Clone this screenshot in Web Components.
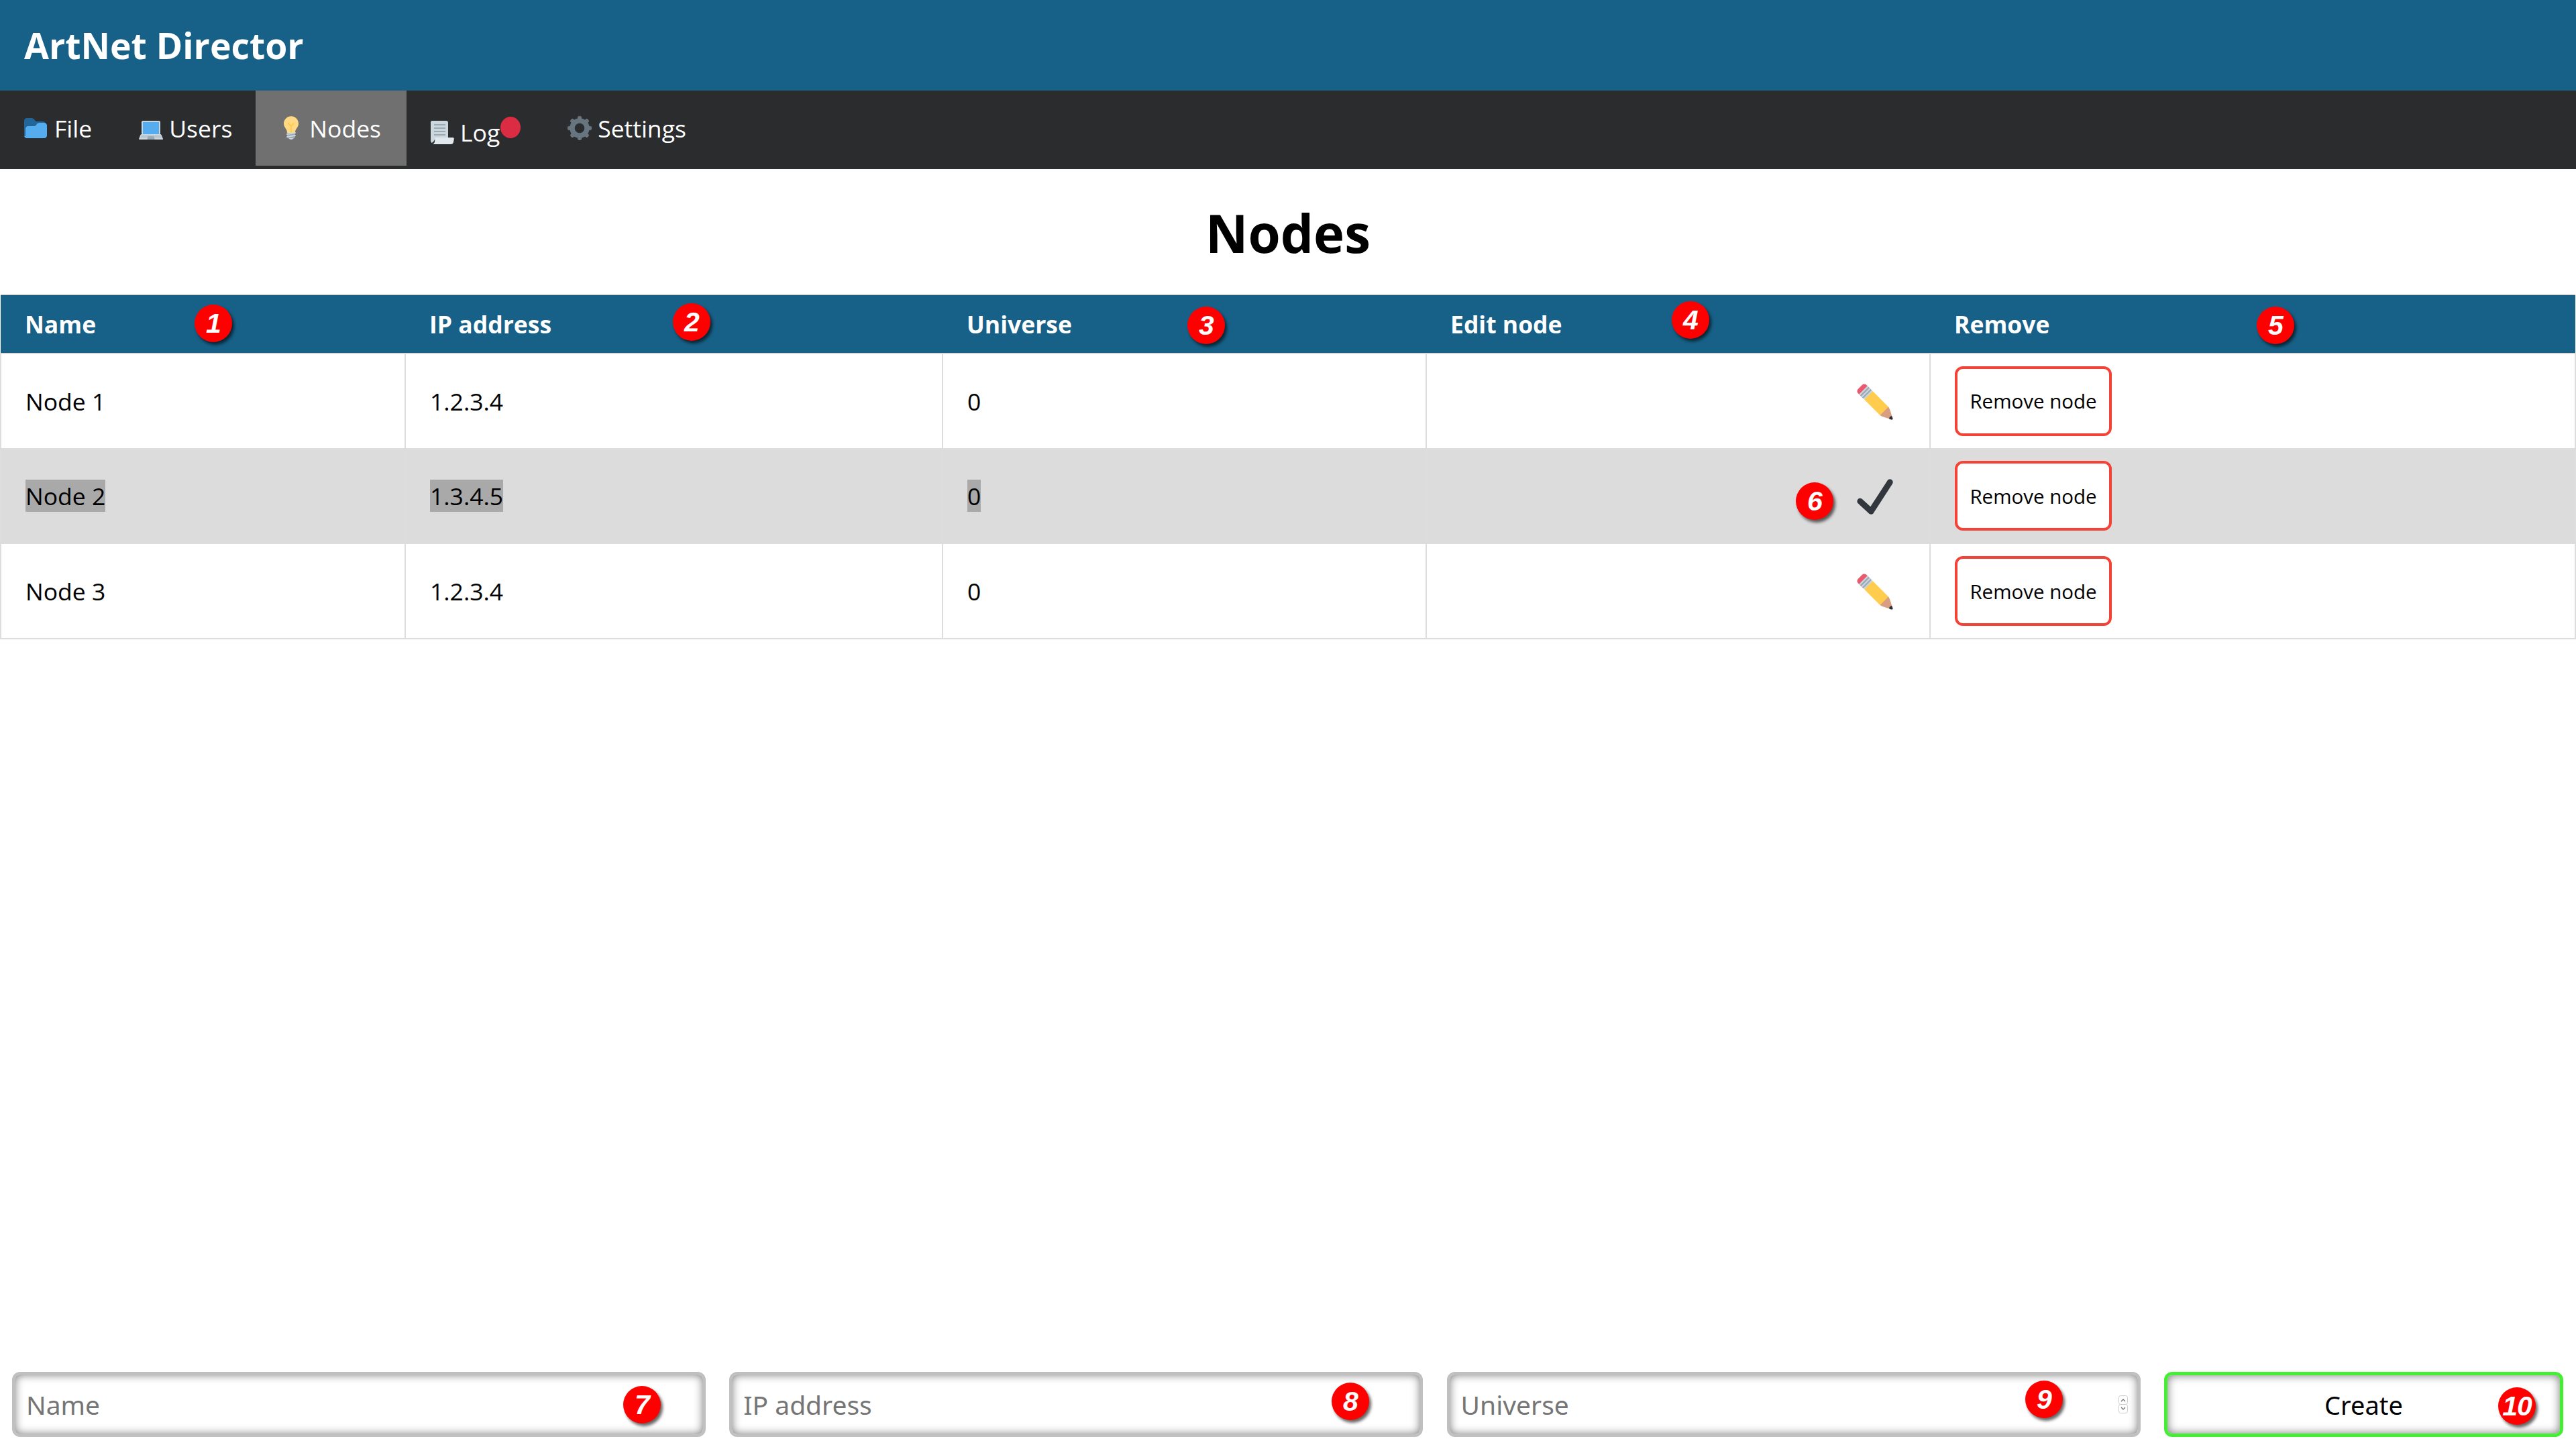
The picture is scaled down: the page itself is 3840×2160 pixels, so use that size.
<!DOCTYPE html>
<html><head><meta charset="utf-8"><title>ArtNet Director</title>
<style>
html,body{margin:0;height:100%;background:#fff}
body{font-family:"Open Sans",sans-serif;font-size:36px;color:#000}
</style></head>
<body>
<app-shell>
  <app-header slot="header">ArtNet Director</app-header>
  <app-nav slot="nav">
    <nav-item icon="folder">File</nav-item>
    <nav-item icon="laptop">Users</nav-item>
    <nav-item icon="bulb" active>Nodes</nav-item>
    <nav-item icon="scroll" dot>Log</nav-item>
    <nav-item icon="gear">Settings</nav-item>
  </app-nav>
  <page-title>Nodes</page-title>
  <node-table></node-table>
  <node-form slot="footer"></node-form>
  <note-badge n="1" style="left:318px;top:482px"></note-badge>
  <note-badge n="2" style="left:1031px;top:480px"></note-badge>
  <note-badge n="3" style="left:1798px;top:485px"></note-badge>
  <note-badge n="4" style="left:2520px;top:477px"></note-badge>
  <note-badge n="5" style="left:3392px;top:485px"></note-badge>
  <note-badge n="6" style="left:2705px;top:747px"></note-badge>
  <note-badge n="7" style="left:957px;top:2094px"></note-badge>
  <note-badge n="8" style="left:2013px;top:2089px"></note-badge>
  <note-badge n="9" style="left:3047px;top:2086px"></note-badge>
  <note-badge n="10" style="left:3752px;top:2096px"></note-badge>
</app-shell>
<script>
const ICONS={
folder:`<path fill="#226699" d="M0 29c0 2.209 1.791 4 4 4h24c2.209 0 4-1.791 4-4V12c0-2.209-1.791-4-4-4h-9c-3.562 0-3-5-8.438-5H4C1.791 3 0 4.791 0 7v22z"/><path fill="#55ACEE" d="M30 10h-6.562C18 10 18.562 15 15 15H6c-2.209 0-4 1.791-4 4v10c0 .553-.448 1-1 1s-1-.447-1-1c0 2.209 1.791 4 4 4h26c2.209 0 4-1.791 4-4V14c0-2.209-1.791-4-4-4z"/>`,
laptop:`<path fill="#CCD6DD" d="M34 29.1c-.4-1-.9-2-2-2h-1.2c1.1 0 1.2-.9 1.2-2V9c0-1.1-.9-2-2-2H6C4.900 7 4 7.900 4 9v16.100c0 1.100.1 2 1.200 2H4c-1.100 0-1.600 1-2 2L.03 33.900C-.07 34.500 0 35 1 35h34c1 0 1.070-.5 1-1.100l-2-4.800z"/><path fill="#55ACEE" d="M6 9h24v18H6z"/><path fill="#99AAB5" d="M2 32.500l2.200-4h27.600l2.200 4z" opacity=".35"/><path fill="#99AAB5" d="M13.500 30h9l1 5h-11z"/>`,
bulb:`<path fill="#FFD983" d="M29 11.060c0 6.439-5 7.439-5 13.440 0 3.098-3.123 3.359-5.500 3.359-2.053 0-6.586-.779-6.586-3.361C11.914 18.500 7 17.500 7 11.060 7 5.029 12.285.14 18.083.14 23.883.14 29 5.029 29 11.060z"/><path fill="#CCD6DD" d="M22.167 32.500c0 .828-2.234 2.500-4.167 2.500-1.933 0-4.167-1.672-4.167-2.500 0-.828 2.233-.5 4.167-.5 1.933 0 4.167-.328 4.167.5z"/><path fill="#FFCC4D" d="M22.707 10.293c-.391-.391-1.023-.391-1.414 0L18 13.586l-3.293-3.293c-.391-.391-1.023-.391-1.414 0s-.391 1.023 0 1.414L17 15.414V26c0 .553.448 1 1 1s1-.447 1-1V15.414l3.707-3.707c.391-.391.391-1.023 0-1.414z"/><path fill="#99AAB5" d="M24 31c0 1.104-.896 2-2 2h-8c-1.104 0-2-.896-2-2v-6h12v6z"/><path fill="#CCD6DD" d="M11.999 32c-.48 0-.904-.347-.985-.836-.091-.544.277-1.060.822-1.150l12-2c.544-.098 1.060.277 1.150.822.091.544-.277 1.060-.822 1.150l-12 2c-.055.01-.111.014-.165.014zm0-4c-.48 0-.904-.347-.985-.836-.091-.544.277-1.060.822-1.150l12-2c.544-.097 1.060.277 1.150.822.091.544-.277 1.060-.822 1.150l-12 2c-.055.01-.111.014-.165.014z"/>`,
scroll:`<path fill="#CCD6DD" d="M3 1h21c2 0 3 1 3 3v25H7c-1 3-4.500 5-4.500 5C1.500 33 1 32 1 31V3c0-1 1-2 2-2z"/><path fill="#99AAB5" d="M6 6h17v2H6zM6 11h17v2H6zM6 16h17v2H6zM6 21h17v2H6z"/><path fill="#E1E8ED" d="M9 26h25c1.500 0 2 1 1.800 2.500l-.8 4C34.700 34.500 33.500 36 31 36H3c2.500 0 3.800-2 4-4l.5-4.500C7.600 26.500 8 26 9 26z"/>`,
gear:`<g fill="#66757F"><circle cx="18" cy="18" r="11" fill="none" stroke="#66757F" stroke-width="7.500"/><rect x="15" y="0" width="6" height="9" rx="2"/><rect x="15" y="27" width="6" height="9" rx="2"/><rect x="0" y="15" width="9" height="6" rx="2"/><rect x="27" y="15" width="9" height="6" rx="2"/><g transform="rotate(45 18 18)"><rect x="15" y="0" width="6" height="9" rx="2"/><rect x="15" y="27" width="6" height="9" rx="2"/><rect x="0" y="15" width="9" height="6" rx="2"/><rect x="27" y="15" width="9" height="6" rx="2"/></g></g>`,
pencil:`<path fill="#D99E82" d="M35.222 33.598c-.647-2.101-1.705-6.059-2.325-7.566-.501-1.216-.969-2.438-1.544-3.014-.575-.575-1.553-.53-2.143.058 0 0-2.469 1.675-3.354 2.783-1.108.882-2.785 3.357-2.785 3.357-.59.59-.635 1.567-.06 2.143.576.575 1.798 1.043 3.015 1.544 1.506.62 5.465 1.676 7.566 2.325.359.11 1.740-.271 1.629-.63z"/><path fill="#EA596E" d="M13.643 5.308c1.151 1.151 1.151 3.016 0 4.167l-4.167 4.168c-1.151 1.150-3.018 1.150-4.167 0L1.141 9.475c-1.150-1.151-1.150-3.016 0-4.167l4.167-4.167c1.150-1.151 3.016-1.151 4.167 0l4.168 4.167z"/><path fill="#FFCC4D" d="M31.353 23.018l-4.170 4.170-4.163 4.165L7.392 15.726l8.335-8.334 15.626 15.626z"/><path fill="#292F33" d="M32.078 34.763s2.709 1.489 3.441.757c.732-.732-.765-3.435-.765-3.435s-2.566.048-2.676 2.678z"/><path fill="#CCD6DD" d="M2.183 10.517l8.335-8.335 5.208 5.209-8.334 8.335z"/><path fill="#99AAB5" d="M3.225 11.558l8.334-8.334 1.042 1.042L4.267 12.600zm2.083 2.086l8.335-8.335 1.042 1.042-8.335 8.334z"/>`,
check:`<path fill="#31373D" d="M34.459 1.375c-1.391-.902-3.248-.506-4.149.884L13.500 28.170l-8.198-7.580c-1.217-1.125-3.114-1.051-4.239.166-1.125 1.216-1.051 3.115.166 4.239l10.764 9.952s.309.266.452.359c.504.328 1.070.484 1.630.484.982 0 1.945-.482 2.520-1.368L35.343 5.524c.902-1.390.506-3.248-.884-4.149z"/>`
};
function def(name,css,html){
  customElements.define(name,class extends HTMLElement{
    constructor(){super();this.attachShadow({mode:'open'});}
    connectedCallback(){
      const h=typeof html==='function'?html(this):html;
      this.shadowRoot.innerHTML=`<style>${css}</style>${h}`;
    }
  });
}
def('tw-icon',':host{display:inline-block;width:var(--s,36px);height:var(--s,36px);flex:none}svg{display:block;width:100%;height:100%}',
  e=>`<svg viewBox="0 0 36 36" xmlns="http://www.w3.org/2000/svg">${ICONS[e.getAttribute('name')]}</svg>`);
def('app-shell',`:host{display:flex;flex-direction:column;height:100vh;position:relative;overflow:hidden}
  .main{flex:1;min-height:0}`,`<slot name="header"></slot><slot name="nav"></slot><div class="main"><slot></slot></div><slot name="footer"></slot>`);
def('app-header',`:host{display:flex;align-items:center;height:135px;padding:0 36px;box-sizing:border-box;background:#176087;color:#fff;font-size:53.5px;font-weight:700}`,`<slot></slot>`);
def('app-nav',`:host{display:flex;align-items:flex-start;height:117px;padding-left:1px;box-sizing:border-box;background:#2b2c2e;color:#fff;font-size:35.5px}`,`<slot></slot>`);
def('nav-item',`:host{display:flex;align-items:center;gap:9px;height:112px;padding:0 35px;box-sizing:border-box;position:relative;color:#fff}
  :host([active]){background:#707070;padding-right:38px}
  :host([dot]){padding-right:66px;padding-top:12px}
  .dot{position:absolute;left:140px;top:39px;width:30px;height:32px;border-radius:50%;background:#dc2c44}`,
  e=>`<tw-icon name="${e.getAttribute('icon')}"></tw-icon><span><slot></slot></span>${e.hasAttribute('dot')?'<i class="dot"></i>':''}`);
def('page-title',`:host{display:block;height:186px;box-sizing:border-box;padding-top:50px;text-align:center;font-size:78px;font-weight:700;line-height:90px}`,`<slot></slot>`);
def('node-table',`:host{display:block}
  table{width:3840px;table-layout:fixed;border-collapse:collapse;font-size:35.5px}
  th{background:#176087;color:#fff;font-weight:700;text-align:left;height:88px;padding:0 0 0 36px;border:2px solid #ddd;border-left:0;border-right:0;box-sizing:border-box}
  td{height:141.67px;padding:0 0 0 36px;border:2px solid #ddd;box-sizing:border-box}
  tr.sel td{background:#dcdcdc}
  tr.sel mark{background:#a9a9a9;color:inherit}
  td.edit{text-align:right;padding-right:54px}
  td.edit tw-icon{--s:54px;vertical-align:middle}
  button{display:block;box-sizing:border-box;width:234px;height:104px;background:#fff;border:4px solid #f44336;border-radius:12px;font:29.5px "Open Sans",sans-serif;color:#000;padding:0}`,
  ()=>{
   const rows=[['Node 1','1.2.3.4','0',0],['Node 2','1.3.4.5','0',1],['Node 3','1.2.3.4','0',0]];
   return `<table><colgroup><col style="width:603px"><col style="width:801px"><col style="width:721px"><col style="width:751px"><col></colgroup>
   <thead><tr><th>Name</th><th>IP address</th><th>Universe</th><th>Edit node</th><th>Remove</th></tr></thead><tbody>`+
   rows.map(r=>{const w=t=>r[3]?`<mark>${t}</mark>`:t;
     return `<tr class="${r[3]?'sel':''}"><td>${w(r[0])}</td><td>${w(r[1])}</td><td>${w(r[2])}</td><td class="edit"><tw-icon name="${r[3]?'check':'pencil'}"></tw-icon></td><td><button>Remove node</button></td></tr>`}).join('')+`</tbody></table>`;
  });
def('node-form',`:host{display:flex;gap:35.3px;padding:0 19px 18px 18px;font-family:"Noto Sans",sans-serif;font-size:39px}
  .f{flex:0 0 1034px;box-sizing:border-box;height:97px;border:4px solid #c0c0c0;border-radius:12px;box-shadow:inset 0 0 14px #777;display:flex;align-items:center;padding:0 15px 0 17px;background:#fff}
  input{flex:1;min-width:0;border:0;outline:0;background:transparent;font:inherit;padding:0;color:#000}
  input::placeholder{color:#757575;opacity:1}
  .b{flex:1;box-sizing:border-box;height:97px;border:5px solid #44ee33;border-radius:12px;box-shadow:inset 0 0 14px #777;background:#fff;font:38px "Noto Sans",sans-serif;color:#000;padding:0}
  svg{flex:none;display:block}`,
  `<label class="f"><input placeholder="Name"></label><label class="f"><input placeholder="IP address"></label>
   <label class="f"><input placeholder="Universe"><svg width="14" height="27" viewBox="0 0 14 27"><g fill="#fff" stroke="#ccc" stroke-width="1"><rect x=".5" y=".5" width="13" height="13" rx="3"/><rect x=".5" y="13.500" width="13" height="13" rx="3"/></g><path d="M4 9l3-3 3 3M4 18l3 3 3-3" fill="none" stroke="#666" stroke-width="1.200"/></svg></label>
   <button class="b">Create</button>`);
def('note-badge',`:host{position:absolute;width:56px;height:56px;margin:-28px 0 0 -28px;border-radius:50%;background:#f00;color:#fff;box-shadow:3px 4px 4px rgba(0,0,0,.6);display:flex;align-items:center;justify-content:center;font:italic 700 41px "Liberation Sans",sans-serif;letter-spacing:-1px}`,
  e=>e.getAttribute('n'));
</script>
</body></html>
